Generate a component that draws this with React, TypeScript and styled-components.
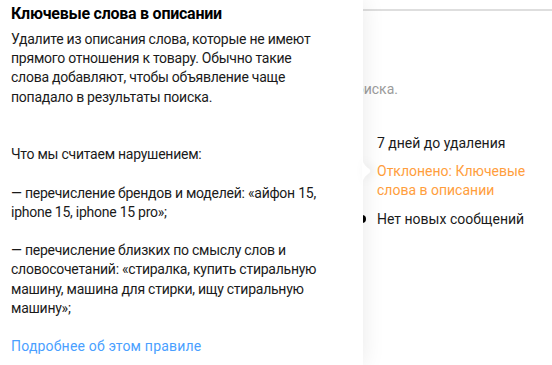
import React from "react";
import styled, { createGlobalStyle } from "styled-components";

const Global = createGlobalStyle`
  html, body { margin: 0; padding: 0; background: #fff; }
  body { font-family: Roboto, "Noto Sans", Arial, sans-serif; -webkit-font-smoothing: antialiased; }
  * { box-sizing: border-box; }
`;

const Page = styled.div`
  position: relative;
  width: 552px;
  height: 365px;
  overflow: hidden;
  background: #fff;
  padding-top: 9px;
`;

const TopLine = styled.div`
  height: 2px;
  background: #dedede;
`;

const Hint = styled.div`
  width: 398px;
  margin-top: 68px;
  text-align: right;
  white-space: nowrap;
  font-size: 14px;
  line-height: 20px;
  color: #9b9b9b;
`;

const StatusList = styled.div`
  display: flex;
  flex-direction: column;
  gap: 9px;
  margin-top: 35px;
  padding-left: 377px;
  font-size: 14px;
  line-height: 19.2px;
  color: #1a1a1a;
`;

const Status = styled.div<{ $tone?: "warn" }>`
  color: ${(p) => (p.$tone === "warn" ? "#ff9e3d" : "#1a1a1a")};
`;

const StatusRow = styled.div`
  display: flex;
  align-items: center;
  gap: 11px;
  margin-left: -19px;
`;

const Dot = styled.span`
  width: 8px;
  height: 8px;
  border-radius: 50%;
  background: #000;
  flex: none;
`;

const Popover = styled.div`
  position: absolute;
  left: 0;
  top: 0;
  width: 363px;
  height: 365px;
  background: #fff;
  padding: 4px 11px;
  box-shadow: 0 0 22px rgba(0, 0, 0, 0.09);
  color: #1a1a1a;
`;

const Tail = styled.svg`
  position: absolute;
  left: 362px;
  top: 154px;
  filter: drop-shadow(3px 0 4px rgba(0, 0, 0, 0.07));
`;

const Title = styled.h3`
  margin: 0 0 7px;
  font-size: 16px;
  line-height: 19px;
  font-weight: 700;
  letter-spacing: -0.25px;
  color: #000;
`;

const Paragraph = styled.p<{ $gap?: number }>`
  margin: 0 0 ${(p) => p.$gap ?? 19.2}px;
  font-size: 14px;
  line-height: 19.2px;
  letter-spacing: -0.25px;
  white-space: nowrap;
`;

const MoreLink = styled.a`
  display: block;
  font-size: 14px;
  line-height: 19.2px;
  letter-spacing: 0.2px;
  color: #4a9fff;
  text-decoration: none;
`;

export default function App() {
  return (
    <>
      <Global />
      <Page>
        <TopLine />
        <Hint>из поиска.</Hint>
        <StatusList>
          <Status>7 дней до удаления</Status>
          <Status $tone="warn">
            Отклонено: Ключевые
            <br />
            слова в описании
          </Status>
          <StatusRow>
            <Dot />
            <span>Нет новых сообщений</span>
          </StatusRow>
        </StatusList>

        <Popover>
          <Title>Ключевые слова в описании</Title>
          <Paragraph $gap={38.4}>
            Удалите из описания слова, которые не имеют
            <br />
            прямого отношения к товару. Обычно такие
            <br />
            слова добавляют, чтобы объявление чаще
            <br />
            попадало в результаты поиска.
          </Paragraph>
          <Paragraph>Что мы считаем нарушением:</Paragraph>
          <Paragraph>
            — перечисление брендов и моделей: «айфон 15,
            <br />
            iphone 15, iphone 15 pro»;
          </Paragraph>
          <Paragraph>
            — перечисление близких по смыслу слов и
            <br />
            словосочетаний: «стиралка, купить стиральную
            <br />
            машину, машина для стирки, ищу стиральную
            <br />
            машину»;
          </Paragraph>
          <MoreLink href="#">Подробнее об этом правиле</MoreLink>
        </Popover>
        <Tail width="10" height="34" viewBox="0 0 10 34">
          <path d="M0 0 C0 8 2 11 6 14 C9 16 9 18 6 20 C2 23 0 26 0 34 Z" fill="#fff" />
        </Tail>
      </Page>
    </>
  );
}
